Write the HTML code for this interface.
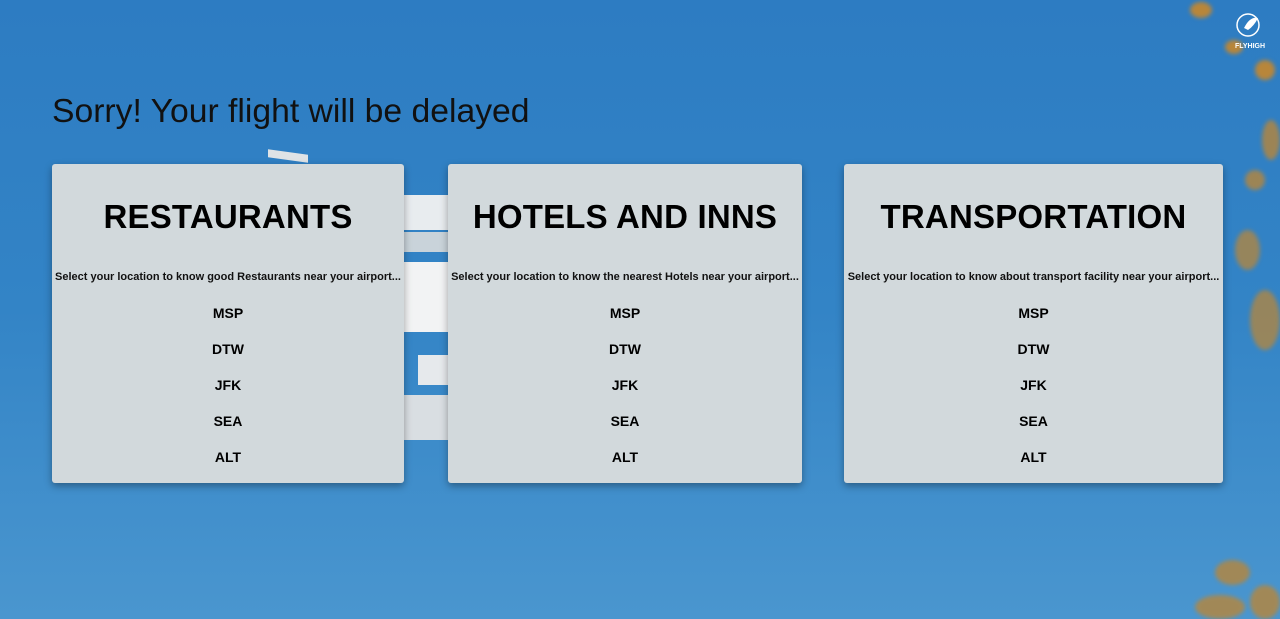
<!DOCTYPE html>
<html><head><style>
body{margin:0;width:1280px;height:619px;overflow:hidden;position:relative;font-family:"Liberation Sans",Arial,sans-serif;
background:linear-gradient(180deg,#2d7cc2 0%,#3384c6 50%,#4a96cf 100%);}
h1{position:absolute;left:52px;top:92px;margin:0;font-size:33.7px;font-weight:normal;color:#111;}
.card{position:absolute;top:164px;height:319px;background:#d2d9dc;border-radius:3px;box-shadow:0 3px 8px rgba(0,0,0,.35);text-align:center;color:#000}
.card h2{margin:0;position:absolute;top:34px;width:100%;font-size:33px;font-weight:bold;letter-spacing:.2px}
.card p{margin:0;position:absolute;top:107px;width:100%;font-size:11px;font-weight:bold;white-space:nowrap;overflow:hidden;color:#111}
.card ul{list-style:none;margin:0;padding:0;position:absolute;top:141px;width:100%;font-size:14px;font-weight:bold}
.card li{height:36px}
.w{position:absolute;background:#eef0f2}
.leaf{position:absolute;border-radius:50%;background:#b8863a;filter:blur(2px)}
</style></head><body>
<div class="w" style="left:268px;top:152px;width:40px;height:8px;transform:skewY(8deg);background:#dfe3e6"></div>
<div class="w" style="left:404px;top:195px;width:44px;height:35px;background:#e8ecef"></div>
<div class="w" style="left:404px;top:232px;width:44px;height:20px;background:#c9d3da"></div>
<div class="w" style="left:404px;top:262px;width:44px;height:70px;background:#f2f3f4"></div>
<div class="w" style="left:418px;top:355px;width:30px;height:30px;background:#e6e9ec"></div>
<div class="w" style="left:404px;top:395px;width:44px;height:45px;background:#d9dee2"></div>
<div class="leaf" style="left:1190px;top:2px;width:22px;height:16px"></div>
<div class="leaf" style="left:1225px;top:40px;width:18px;height:14px"></div>
<div class="leaf" style="left:1255px;top:60px;width:20px;height:20px"></div>
<div class="leaf" style="left:1262px;top:120px;width:18px;height:40px;opacity:.8"></div>
<div class="leaf" style="left:1245px;top:170px;width:20px;height:20px;opacity:.8"></div>
<div class="leaf" style="left:1235px;top:230px;width:25px;height:40px;opacity:.75"></div>
<div class="leaf" style="left:1250px;top:290px;width:30px;height:60px;opacity:.75"></div>
<div class="leaf" style="left:1215px;top:560px;width:35px;height:25px;opacity:.8"></div>
<div class="leaf" style="left:1195px;top:595px;width:50px;height:24px;opacity:.8"></div>
<div class="leaf" style="left:1250px;top:585px;width:30px;height:34px;opacity:.8"></div>
<svg style="position:absolute;left:1232px;top:12px" width="36" height="40" viewBox="0 0 36 40">
<circle cx="16" cy="13" r="11" fill="none" stroke="#fff" stroke-width="1.5"/>
<path d="M12 16 Q18 4 26 6 Q22 14 16 18 Z" fill="#fff"/>
<text x="18" y="36" font-size="7" font-weight="bold" fill="#fff" text-anchor="middle" font-family="Liberation Sans">FLYHIGH</text>
</svg>
<h1>Sorry! Your flight will be delayed</h1>
<div class="card" style="left:52px;width:352px"><h2>RESTAURANTS</h2><p>Select your location to know good Restaurants near your airport...</p><ul><li>MSP</li><li>DTW</li><li>JFK</li><li>SEA</li><li>ALT</li></ul></div>
<div class="card" style="left:448px;width:354px"><h2>HOTELS AND INNS</h2><p>Select your location to know the nearest Hotels near your airport...</p><ul><li>MSP</li><li>DTW</li><li>JFK</li><li>SEA</li><li>ALT</li></ul></div>
<div class="card" style="left:844px;width:379px"><h2>TRANSPORTATION</h2><p>Select your location to know about transport facility near your airport...</p><ul><li>MSP</li><li>DTW</li><li>JFK</li><li>SEA</li><li>ALT</li></ul></div>
</body></html>
